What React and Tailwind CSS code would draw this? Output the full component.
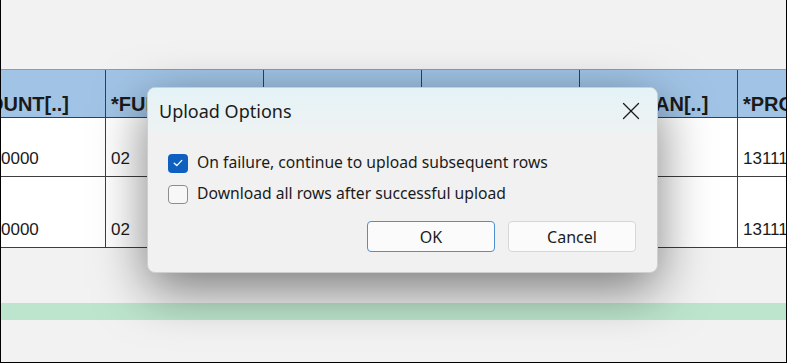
import { X } from 'lucide-react';

const columns = [
  { head: '*AMOUNT[..]', rows: ['10000.0000', '10000.0000'], w: 'w-[162px]' },
  { head: '*FUND[..]', rows: ['02', '02'], w: 'w-[158px]' },
  { head: '*DEPT[..]', rows: ['', ''], w: 'w-[158px]' },
  { head: '*ACCOUNT[..]', rows: ['', ''], w: 'w-[158px]' },
  { head: '*FY_PLAN[..]', rows: ['', ''], w: 'w-[158px]' },
  { head: '*PROJECT[..]', rows: ['1311100', '1311100'], w: 'w-[158px]' },
];

const Checkbox = ({ checked }) =>
  checked ? (
    <span className="flex h-[19px] w-[20px] items-center justify-center rounded-[4px] bg-[#0f5fc0]">
      <svg width="10" height="8" viewBox="0 0 10 8" fill="none">
        <path d="M1.2 4.2 L3.8 6.6 L8.8 1.4" stroke="white" strokeWidth="1.3" strokeLinecap="round" strokeLinejoin="round" />
      </svg>
    </span>
  ) : (
    <span className="h-[19px] w-[20px] rounded-[4px] border border-[#8d8d8d] bg-[#f7f7f7]" />
  );

const App = () => {
  return (
    <div className="relative h-[363px] w-[787px] overflow-hidden border-x border-b border-black bg-[#f2f2f2] font-['Liberation_Sans',sans-serif]">
      {/* sheet */}
      <div className="pt-[69px]">
        <div className="-ml-[57px] flex border-t border-[#9a9a9a]">
          {columns.map((col, i) => (
            <div key={i} className={`${col.w} shrink-0 border-r border-[#3e3e3e]`}>
              <div className="flex h-[48px] items-end overflow-hidden whitespace-nowrap border-b border-[#3e3e3e] bg-[#a1c4e6] pb-[3px] pl-[5px] text-[20px] font-bold leading-none text-[#1a1a1a]">
                {col.head}
              </div>
              <div className="flex h-[59px] items-end overflow-hidden whitespace-nowrap border-b border-[#3e3e3e] bg-white pb-[5px] pl-[5px] text-[17px] text-[#1a1a1a]">
                {col.rows[0]}
              </div>
              <div className="flex h-[71px] items-end overflow-hidden whitespace-nowrap border-b border-[#3e3e3e] bg-white pb-[5px] pl-[5px] text-[17px] text-[#1a1a1a]">
                {col.rows[1]}
              </div>
            </div>
          ))}
        </div>
        <div className="mt-[55px] h-[17px] bg-[#bde5cd]" />
      </div>

      {/* dialog */}
      <div className="absolute left-[146px] top-[87px] flex h-[186px] w-[511px] flex-col overflow-hidden rounded-[8px] border border-[#cfcfcf] bg-[#f1f1f1] font-['Noto_Sans',sans-serif] text-[#1b1b1b] shadow-[0_16px_52px_rgba(0,0,0,0.5)]">
        <div className="flex h-[46px] items-center justify-between bg-gradient-to-b from-[#e4f3f7] to-[#eff2f2] pl-[11px] pr-[11px]">
          <span className="text-[18px]">Upload Options</span>
          <X size={30} strokeWidth={1} className="text-[#1b1b1b]" />
        </div>
        <div className="flex flex-col gap-[11px] px-[20px] pt-[19px] text-[15.7px]">
          <label className="flex h-[20px] items-center gap-[9px]">
            <Checkbox checked />
            <span>On failure, continue to upload subsequent rows</span>
          </label>
          <label className="flex h-[20px] items-center gap-[9px]">
            <Checkbox />
            <span>Download all rows after successful upload</span>
          </label>
        </div>
        <div className="mt-[17px] flex justify-end gap-[13px] pr-[21px] text-[16px]">
          <button className="h-[31px] w-[128px] rounded-[4px] border border-[#4f8fd1] bg-[#fbfbfb]">OK</button>
          <button className="h-[31px] w-[128px] rounded-[4px] border border-[#d6d6d6] bg-[#fbfbfb]">Cancel</button>
        </div>
      </div>
    </div>
  );
};

export default App;
